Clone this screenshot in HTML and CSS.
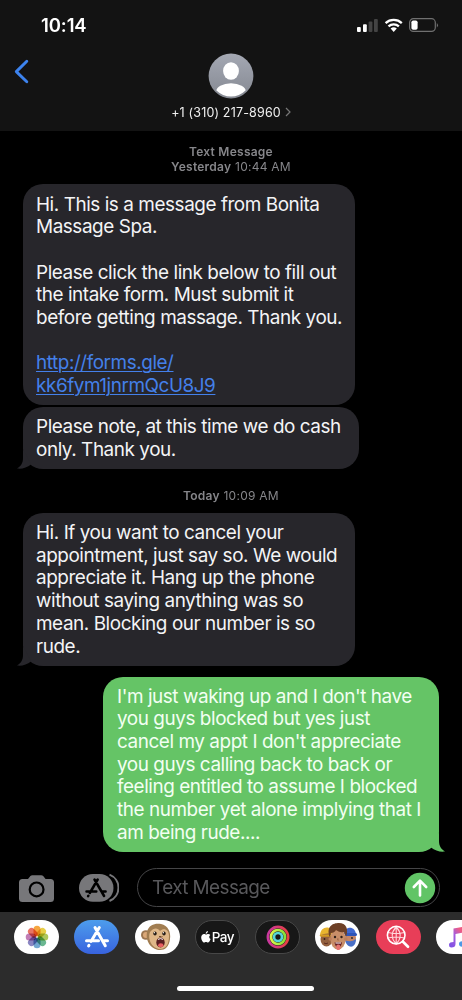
FILE: index.html
```html
<!DOCTYPE html>
<html lang="en">
<head>
<meta charset="utf-8">
<title>Messages</title>
<link rel="stylesheet" href="styles.css">
</head>
<body>
<div class="phone">
  <header class="header">
    <div class="status">
      <span class="clock">10:14</span>
      <svg class="status-icons" width="84" height="16" viewBox="0 0 84 16">
        <rect x="1" y="10" width="3.8" height="5" rx="1" fill="#fff"/>
        <rect x="7" y="7.3" width="3.8" height="7.7" rx="1" fill="#fff"/>
        <rect x="12.6" y="4.5" width="3.8" height="10.5" rx="1" fill="#444"/>
        <rect x="18" y="2" width="3.8" height="13" rx="1" fill="#444"/>
        <g fill="none" stroke="#fff" stroke-width="2.3">
          <path d="M29.6 6.1a12 12 0 0 1 16.2 0"/>
          <path d="M32.5 9.4a7.7 7.7 0 0 1 10.4 0"/>
        </g>
        <path d="M34.6 11.6a4.7 4.7 0 0 1 6.2 0L37.7 14.9z" fill="#fff"/>
        <rect x="53.6" y="1.7" width="25.7" height="12.7" rx="3.8" fill="none" stroke="#707070" stroke-width="1.2"/>
        <rect x="55.4" y="3.5" width="6.2" height="9.2" rx="1.8" fill="#fff"/>
        <path d="M80.8 6a2.7 2.7 0 0 1 0 4.4z" fill="#707070"/>
      </svg>
    </div>
    <div class="contact-row">
      <svg class="back" width="16" height="26" viewBox="0 0 16 26"><path d="M12.8 2.2 2.3 12.6l10.5 10.2" fill="none" stroke="#3d83ee" stroke-width="2.9" stroke-linecap="round" stroke-linejoin="round"/></svg>
      <svg class="avatar" width="46" height="46" viewBox="0 0 46 46">
        <defs>
          <linearGradient id="av" x1="0" y1="0" x2="0" y2="1"><stop offset="0" stop-color="#a4a8b3"/><stop offset="1" stop-color="#858992"/></linearGradient>
          <clipPath id="avc"><circle cx="23" cy="23" r="20.5"/></clipPath>
        </defs>
        <circle cx="23" cy="23" r="22.4" fill="url(#av)"/>
        <g fill="#fff" clip-path="url(#avc)"><ellipse cx="23" cy="18" rx="7.9" ry="8.8"/><ellipse cx="23" cy="39" rx="15" ry="8.8"/></g>
      </svg>
    </div>
    <div class="contact-name"><span>+1 (310) 217-8960</span><svg width="6" height="10" viewBox="0 0 6 10"><path d="M1 1l4 4-4 4" fill="none" stroke="#777" stroke-width="1.2"/></svg></div>
  </header>

  <main class="thread">
    <div class="stamp stamp-first"><b>Text Message</b><br><b>Yesterday</b> 10:44 AM</div>
    <div class="bubble received b1">Hi. This is a message from Bonita<br>Massage Spa.<br><br>Please click the link below to fill out<br>the intake form. Must submit it<br>before getting massage. Thank you.<br><br><span class="link">http://forms.gle/<br>kk6fym1jnrmQcU8J9</span></div>
    <div class="bubble received b2">Please note, at this time we do cash<br>only. Thank you.
      <svg class="tail" width="20" height="20" viewBox="0 0 20 20"><path d="M6 0v9c0 5-2 8-6 10.500 5 .6 10-.7 14-4z"/></svg>
    </div>
    <div class="stamp stamp-today"><b>Today</b> 10:09 AM</div>
    <div class="bubble received b3">Hi. If you want to cancel your<br>appointment, just say so. We would<br>appreciate it. Hang up the phone<br>without saying anything was so<br>mean. Blocking our number is so<br>rude.
      <svg class="tail" width="20" height="20" viewBox="0 0 20 20"><path d="M6 0v9c0 5-2 8-6 10.500 5 .6 10-.7 14-4z"/></svg>
    </div>
    <div class="bubble sent">I'm just waking up and I don't have<br>you guys blocked but yes just<br>cancel my appt I don't appreciate<br>you guys calling back to back or<br>feeling entitled to assume I blocked<br>the number yet alone implying that I<br>am being rude....
      <svg class="tail" width="20" height="20" viewBox="0 0 20 20"><path d="M14 0v9c0 5 2 8 6 10.500-5 .6-10-.7-14-4z"/></svg>
    </div>
  </main>

  <div class="compose">
    <svg class="camera" width="36" height="28" viewBox="0 0 36 28">
      <path d="M3.500 4H9l2.400-3q.7-.8 2-.8h8.800q1.300 0 2 .8L26.600 4h4.900Q35 4 35 7.500v16Q35 27 31.500 27h-28Q0 27 0 23.500v-16Q0 4 3.500 4z" fill="#77777a"/>
      <circle cx="17.600" cy="14.400" r="6.900" fill="#77777a" stroke="#000" stroke-width="2.200"/>
    </svg>
    <svg class="apps" width="40" height="30" viewBox="0 0 40 30">
      <path d="M26.500 1.600a14.200 14.200 0 0 1 0 26.400" fill="none" stroke="#77777a" stroke-width="2" transform="translate(4 0)"/>
      <rect x="0" y="1" width="34.500" height="27.800" rx="13.900" fill="#77777a"/>
      <g stroke="#000" stroke-width="2.500" stroke-linecap="round" fill="none"><path d="M18.700 6.500 10.800 20M15.500 6.500l9.600 16.500M7.500 18.500h9.800M22.400 18.500h4.200M9.400 22.700l-.3.500"/></g>
    </svg>
    <div class="field"><span>Text Message</span>
      <svg width="32" height="32" viewBox="0 0 32 32"><circle cx="16" cy="16" r="15.200" fill="#61c466"/><path d="M16 23.500V9M9.800 15 16 8.700l6.200 6.300" fill="none" stroke="#fff" stroke-width="2.600" stroke-linecap="round" stroke-linejoin="round"/></svg>
    </div>
  </div>

  <footer class="drawer">
    <div class="app-row">
      <div class="app white">
        <svg width="24" height="24" viewBox="-12 -12 24 24"><g class="petals">
          <rect x="-3.500" y="-11.300" width="7" height="10.500" rx="3.500" fill="#f49a27"/>
          <rect x="-3.500" y="-11.300" width="7" height="10.500" rx="3.500" fill="#e5c82e" transform="rotate(45)"/>
          <rect x="-3.500" y="-11.300" width="7" height="10.500" rx="3.500" fill="#a2bf45" transform="rotate(90)"/>
          <rect x="-3.500" y="-11.300" width="7" height="10.500" rx="3.500" fill="#55ad82" transform="rotate(135)"/>
          <rect x="-3.500" y="-11.300" width="7" height="10.500" rx="3.500" fill="#5e9bc9" transform="rotate(180)"/>
          <rect x="-3.500" y="-11.300" width="7" height="10.500" rx="3.500" fill="#7a75b9" transform="rotate(225)"/>
          <rect x="-3.500" y="-11.300" width="7" height="10.500" rx="3.500" fill="#b86bac" transform="rotate(270)"/>
          <rect x="-3.500" y="-11.300" width="7" height="10.500" rx="3.500" fill="#e5614f" transform="rotate(315)"/></g></svg>
      </div>
      <div class="app store">
        <svg width="26" height="24" viewBox="0 0 26 24"><path d="M15.300 2.500 7 16.500M11 2.500 21.300 20.800M2.500 15.700h12M18.800 15.700h4.700M5 20.300l-.4.700" fill="none" stroke="#fff" stroke-width="3" stroke-linecap="round"/></svg>
      </div>
      <div class="app white">
        <svg width="34" height="30" viewBox="0 0 32 30">
          <circle cx="4.800" cy="13" r="4.800" fill="#9c7650"/><circle cx="5" cy="13" r="3" fill="#dba878"/>
          <path d="M6 10C8 2 15 1 20 2c7 1.500 10 8 9 15-1 8-5 11-10 11-7 0-15-7-13-18z" fill="#a17d51"/>
          <path d="M9 10c4-5 8-4 10-1 4-4 9-1 9 5 0 8-3 13-9 13C12 27 6 18 9 10z" fill="#dfb788"/>
          <ellipse cx="14" cy="11.500" rx="1.700" ry="2" fill="#292019"/><ellipse cx="23" cy="11.500" rx="1.700" ry="2" fill="#292019"/>
          <circle cx="13.500" cy="10.700" r=".6" fill="#fff"/><circle cx="22.500" cy="10.700" r=".6" fill="#fff"/>
          <path d="M18 14.500h2M20.500 14.500h1" stroke="#76502f"/>
          <ellipse cx="19.500" cy="20.500" rx="4.200" ry="4.900" fill="#581e20"/><ellipse cx="19.800" cy="23.200" rx="2.700" ry="2" fill="#e85f62"/><path d="M17 17.400q2.500-1.600 5 0" stroke="#fff" fill="none"/>
        </svg>
      </div>
      <div class="app dark pay">
        <svg width="10" height="12" viewBox="0 0 10 12"><path d="M6.900 0C7 1.300 6 2.700 4.700 2.700 4.600 1.400 5.700.2 6.900 0zM9.300 4C7.700 5 7.900 7.300 9.600 8c-.6 1.800-1.600 3.500-2.700 3.500-.8 0-1-.5-1.900-.5s-1.200.5-1.900.5C1.700 11.500.2 8.800.2 6.500.2 4.200 1.600 3 3 3c.9 0 1.500.6 2.100.6C5.700 3.600 6.300 3 7.300 3c.8 0 1.500.4 2 1z" fill="#fff"/></svg><span>Pay</span>
      </div>
      <div class="app dark">
        <svg width="24" height="24" viewBox="0 0 24 24" fill="none" stroke-width="2.700">
          <defs><linearGradient id="mv"><stop offset="0" stop-color="#ca38a0"/><stop offset="1" stop-color="#e74040"/></linearGradient><linearGradient id="ex"><stop stop-color="#dcf64c"/><stop offset="1" stop-color="#86df39"/></linearGradient></defs>
          <circle cx="12" cy="12" r="10.100" stroke="url(#mv)"/><circle cx="12" cy="12" r="7" stroke="url(#ex)"/><circle cx="12" cy="12" r="4" stroke="#57d7d8"/></svg>
      </div>
      <div class="app white">
        <svg width="40" height="30" viewBox="0 0 40 30">
          <ellipse cx="8.500" cy="17" rx="6" ry="7.500" fill="#93603e"/><path d="M2 14C2 3 15 3 15 13c-4-2-8-2-13 1z" fill="#e8b52f"/><rect x="1.800" y="12.400" width="11" height="2.400" rx="1.200" fill="#d49b22"/><circle cx="6.500" cy="17" r=".9" fill="#30201a"/><path d="M6 21q2 1.500 4 0" stroke="#5c2b20" fill="none"/>
          <ellipse cx="32.500" cy="16" rx="5.500" ry="7" fill="#c48667"/><path d="M26 12C27 3 38 4 38 13z" fill="#4068cf"/><rect x="27" y="11" width="12" height="3" rx="1.500" fill="#2f55b8"/><path d="M27 18q6 3 11-1c0 10-9 10-11 1z" fill="#496fc6"/><circle cx="34" cy="16" r=".9" fill="#232020"/>
          <ellipse cx="20" cy="17" rx="7.600" ry="10.500" fill="#c88e68"/><circle cx="12.200" cy="17" r="1.800" fill="#bd805c"/><circle cx="27.800" cy="17" r="1.800" fill="#bd805c"/>
          <path d="M11.500 15C8 4 15 1 21 1c7 0 10 6 7 14l-2-5c-4 1-6-1-8-2-1 2-3 3-5 3z" fill="#6d4026"/>
          <circle cx="17" cy="15" r="1.200" fill="#302019"/><circle cx="23.500" cy="15" r="1.200" fill="#302019"/><path d="M20 16l-.5 2h1.500" stroke="#965b3e" stroke-width=".7" fill="none"/><path d="M16.500 20.500q4-1 7.500 0-1 5-3.700 5t-3.800-5z" fill="#651d20"/><path d="M17.500 21h5.500" stroke="#fff"/><ellipse cx="20.300" cy="25.300" rx="2.200" ry="2.800" fill="#e47470"/>
        </svg>
      </div>
      <div class="app red">
        <svg width="24" height="24" viewBox="0 0 24 24" fill="none" stroke="#fff" stroke-linecap="round"><g stroke="#ffd5da" stroke-width="1.100"><path d="M2 7.500q8 2 16.500 0M2 13q8-2 16.500 0M10.200 2v17M10.200 2q-8 8.500 0 17M10.200 2q8 8.500 0 17"/></g><circle cx="10.200" cy="10.200" r="8.800" stroke-width="1.600"/><path d="m17 16.800 5 5" stroke-width="2.700"/></svg>
      </div>
      <div class="app white music">
        <svg width="22" height="24" viewBox="0 0 22 24"><defs><linearGradient id="mu" x1="0" y1="1" x2="1" y2="0"><stop stop-color="#7950e5"/><stop offset=".45" stop-color="#a65ddd"/><stop offset=".7" stop-color="#ee5b83"/></linearGradient></defs><path d="M5.500 3.500 20 .800V18h-2V7L7.500 9v10q0 3.500-4.200 3.500Q1 22.500 1 20q0-2.400 2.700-2.700l1.800-.3z" fill="url(#mu)"/><ellipse cx="14.500" cy="19" rx="3.500" ry="2.700" fill="#4e98e5"/></svg>
      </div>
    </div>
    <div class="home"></div>
  </footer>
</div>
</body>
</html>
```

FILE: styles.css
```css
* { box-sizing: border-box; }
html, body { margin: 0; overflow: hidden; background: #000; }
body { font-family: Inter, "Liberation Sans", sans-serif; }
svg { display: block; flex: none; }
.phone { width: 462px; height: 1000px; display: flex; flex-direction: column; background: #000; overflow: hidden; }

.header { height: 131px; flex: none; background: #131313; display: flex; flex-direction: column; }
.status { height: 53px; padding: 14px 22px 0 41px; display: flex; justify-content: space-between; align-items: flex-start; }
.clock { color: #fff; font-size: 18.500px; font-weight: 600; line-height: 23px; letter-spacing: -.1px; }
.status-icons { margin-top: 3px; }
.contact-row { height: 46px; display: grid; grid-template-columns: 1fr 46px 1fr; }
.back { margin: 6px 0 0 14px; }
.contact-name { display: flex; justify-content: center; align-items: center; gap: 4px; height: 26px; color: #f0f0f0; font-size: 12.500px; letter-spacing: .17px; }

.thread { flex: 1; min-height: 0; display: flex; flex-direction: column; align-items: flex-start; padding: 14px 23px 0; }
.stamp { align-self: stretch; text-align: center; font-size: 12px; line-height: 14.500px; color: #86868a; letter-spacing: .25px; }
.stamp b { font-weight: 600; }
.stamp-first { height: 39px; }
.stamp-today { margin: 20px 0 9px; height: 15px; }
.bubble { position: relative; flex: none; padding: 9.500px 13px 0; border-radius: 20px; font-size: 18.900px; line-height: 22.700px; letter-spacing: -.43px; white-space: nowrap; }
.received { background: #27262b; color: #f4f4f6; }
.b1 { width: 332px; height: 221px; }
.b2 { width: 336px; height: 62px; margin-top: 1.500px; }
.b3 { width: 332px; height: 153px; }
.sent { align-self: flex-end; width: 336px; height: 175px; margin-top: 11px; padding: 9px 13px 0 14px; background: #65c466; color: #f2fff2; }
.tail { position: absolute; bottom: -.5px; }
.received .tail { left: -6px; fill: #27262b; }
.sent .tail { right: -6px; fill: #65c466; }
.link { color: #4480ea; text-decoration: underline; text-decoration-thickness: 1.300px; text-underline-offset: 2px; }

.compose { height: 51px; flex: none; display: flex; align-items: flex-start; padding: 7px 22px 0 19px; }
.camera { margin-top: 7px; }
.apps { margin: 5px 0 0 24px; }
.field { margin-left: 18px; flex: 1; height: 39px; border: 1px solid #454547; border-radius: 20px; display: flex; align-items: center; justify-content: space-between; padding: 0 3px 0 14px; color: #58585b; font-size: 18.900px; letter-spacing: -.58px; }

.drawer { height: 88px; flex: none; background: #2c2c2c; display: flex; flex-direction: column; }
.app-row { display: flex; gap: 15.300px; padding: 8px 0 0 14px; }
.app { width: 45px; height: 34px; flex: none; border-radius: 17px; display: flex; align-items: center; justify-content: center; overflow: hidden; }
.white { background: #fff; }
.petals rect { mix-blend-mode: multiply; fill-opacity: .88; }
.store { background: linear-gradient(#4d9dec, #3863df); }
.dark { background: #171717; border: 1px solid #474747; }
.pay { color: #fff; font-size: 13.500px; font-weight: 500; letter-spacing: -.5px; gap: 1px; }
.red { background: #e83e58; }
.music { justify-content: flex-start; padding-left: 12px; }
.home { width: 137px; height: 5px; margin: 32px 0 0 177px; border-radius: 3px; background: #fff; }
```
